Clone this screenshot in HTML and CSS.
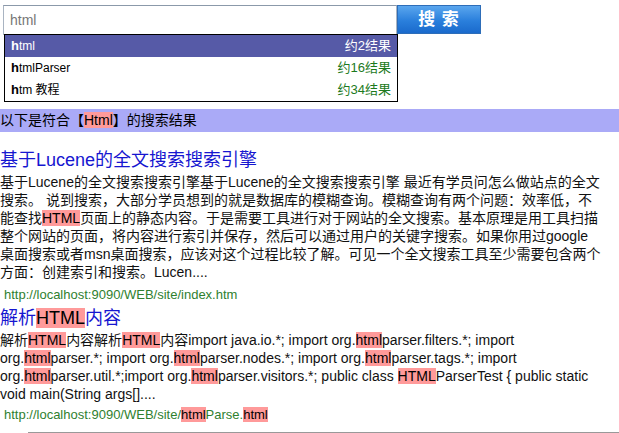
FILE: index.html
```html
<!DOCTYPE html>
<html lang="zh-CN">
<head>
<meta charset="utf-8">
<title>搜索结果</title>
<link rel="stylesheet" href="styles.css">
</head>
<body>
<div class="header">
  <div class="search">
    <div class="box">html</div>
    <div class="btn">搜 索</div>
  </div>
  <ul class="suggest">
    <li class="item active"><span class="kw"><b>h</b>tml</span><span class="cnt">约2结果</span></li>
    <li class="item"><span class="kw"><b>h</b>tmlParser</span><span class="cnt">约16结果</span></li>
    <li class="item"><span class="kw"><b>h</b>tm 教程</span><span class="cnt">约34结果</span></li>
  </ul>
</div>
<div class="bar">以下是符合【<span class="hl">Html</span>】的搜索结果</div>
<div class="result">
  <div class="title">基于Lucene的全文搜索搜索引擎</div>
  <div class="desc">基于Lucene的全文搜索搜索引擎基于Lucene的全文搜索搜索引擎 最近有学员问怎么做站点的全文<br>搜索。 说到搜索，大部分学员想到的就是数据库的模糊查询。模糊查询有两个问题：效率低，不<br>能查找<span class="hl">HTML</span>页面上的静态内容。于是需要工具进行对于网站的全文搜索。基本原理是用工具扫描<br>整个网站的页面，将内容进行索引并保存，然后可以通过用户的关键字搜索。如果你用过google<br>桌面搜索或者msn桌面搜索，应该对这个过程比较了解。可见一个全文搜索工具至少需要包含两个<br>方面：创建索引和搜索。Lucen....</div>
  <div class="url">http://localhost:9090/WEB/site/index.htm</div>
</div>
<div class="result">
  <div class="title">解析<span class="hl">HTML</span>内容</div>
  <div class="desc">解析<span class="hl">HTML</span>内容解析<span class="hl">HTML</span>内容import java.io.*; import org.<span class="hl">html</span>parser.filters.*; import<br>org.<span class="hl">html</span>parser.*; import org.<span class="hl">html</span>parser.nodes.*; import org.<span class="hl">html</span>parser.tags.*; import<br>org.<span class="hl">html</span>parser.util.*;import org.<span class="hl">html</span>parser.visitors.*; public class <span class="hl">HTML</span>ParserTest { public static<br>void main(String args[]....</div>
  <div class="url">http://localhost:9090/WEB/site/<span class="hl">html</span>Parse.<span class="hl">html</span></div>
</div>
<div class="rule"></div>
</body>
</html>
```
FILE: styles.css
```css
* { box-sizing: border-box; }
body {
  margin: 0;
  font-family: "Liberation Sans", "Noto Sans CJK SC", sans-serif;
  font-size: 14px;
  color: #000;
  background: #fff;
}
.header {
  position: relative;
  height: 109px;
  padding: 5px 0 0 3px;
}
.search {
  display: flex;
  align-items: flex-start;
}
.box {
  width: 394px;
  height: 30px;
  border: 1px solid #a9b4c2;
  border-top-color: #8b99aa;
  padding-left: 6px;
  line-height: 28px;
  color: #777;
  font-size: 14px;
}
.btn {
  width: 84px;
  height: 29px;
  border: 1px solid #2d6db8;
  background: linear-gradient(#5aa6ee, #2a7fdc 55%, #1a6acc);
  color: #fff;
  font-weight: bold;
  font-size: 17px;
  line-height: 27px;
  text-align: center;
  letter-spacing: 1px;
}
.suggest {
  position: absolute;
  left: 4px;
  top: 34px;
  width: 394px;
  margin: 0;
  padding: 0;
  list-style: none;
  border: 1px solid #000;
  background: #fff;
  font-size: 12px;
}
.item {
  display: flex;
  justify-content: space-between;
  height: 22px;
  line-height: 22px;
  padding: 0 6px 0 6px;
}
.item b { font-weight: bold; font-size: 13px; }
.cnt { color: #1d7a1d; font-size: 13px; }
.item.active { background: #565aa7; color: #fff; }
.item.active .cnt { color: #fff; }
.bar {
  height: 23px;
  line-height: 23px;
  background: #aaaaf7;
  font-size: 14px;
}
.hl { background: #ff9a9a; color: #000; }
.title {
  margin-top: 15px;
  font-size: 18px;
  line-height: 26px;
  color: #1616d0;
}
.desc {
  line-height: 18px;
  color: #111;
}
.url {
  margin-top: 5px;
  margin-bottom: 1px;
  padding-left: 4px;
  font-size: 13px;
  line-height: 18px;
  color: #2f7f2f;
}
.result + .result .title { margin-top: 0; }
.result + .result .url { margin-top: 3px; }
.rule {
  margin: 8px 0 0 28px;
  border-top: 1px solid #999;
}
```
